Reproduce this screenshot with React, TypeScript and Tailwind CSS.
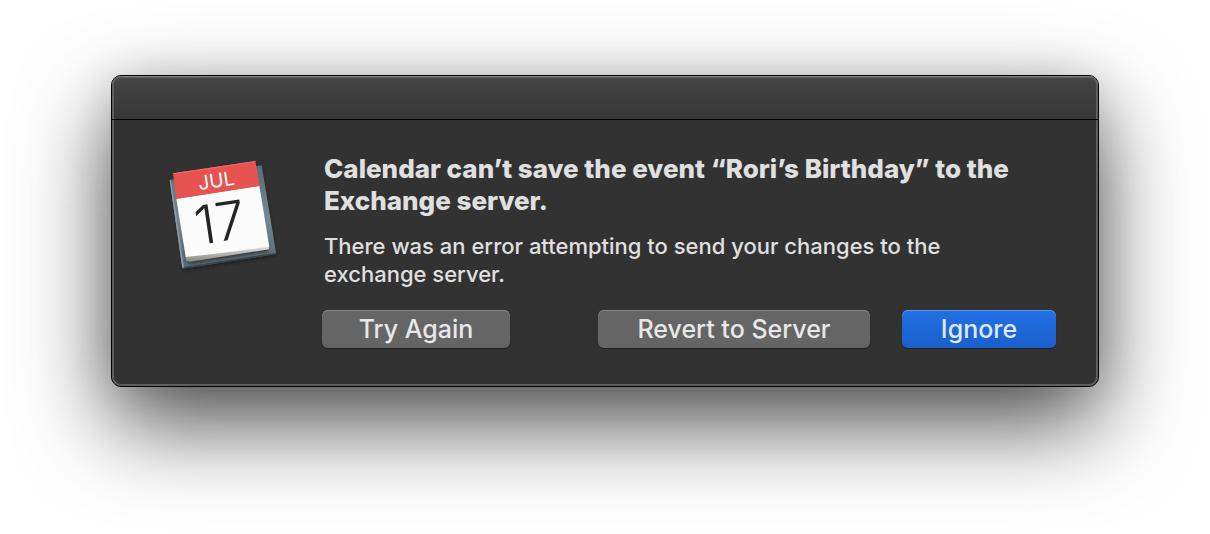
function CalendarIcon() {
  return (
    <svg viewBox="0 9 390 384" className="h-32 w-[130px] shrink-0" role="img" aria-label="Calendar">
      <defs>
        <linearGradient id="slate" x1="0" y1="0" x2="0" y2="1">
          <stop offset="0" stopColor="#5b6c76" />
          <stop offset="0.5" stopColor="#758791" />
          <stop offset="1" stopColor="#56666f" />
        </linearGradient>
        <linearGradient id="curl" x1="0" y1="0" x2="0" y2="1">
          <stop offset="0" stopColor="#e8e8e4" />
          <stop offset="1" stopColor="#85857f" />
        </linearGradient>
        <filter id="soft" x="-20%" y="-20%" width="140%" height="140%">
          <feGaussianBlur stdDeviation="4" />
        </filter>
      </defs>
      <path d="M32 96 L303 50 L350 318 L72 362 Z" fill="#161616" opacity="0.7" filter="url(#soft)" />
      <path d="M29 90 L305 46 L349 312 L67 356 Z" fill="url(#slate)" />
      <path d="M67 352 L349 308 L349 313 L68 357 Z" fill="#36444c" />
      <path d="M29 91 L33 90 L72 352 L67 355 Z" fill="#8b9aa2" />
      <path d="M60 150 L286 110 L326 296 L324 306 L92 342 L80 336 Z" fill="#20282c" opacity="0.65" filter="url(#soft)" />
      <path d="M77 320 L327 287 L327 298 L90 335 L79 333 Z" fill="url(#curl)" />
      <path d="M49 146 L298 107 L328 290 Q205 308 77 321 Z" fill="#fbfbfb" />
      <path d="M39 70 L286 33 L299 108 L49 147 Z" fill="#e65350" />
      <path d="M39 70 L286 33 L287 36 L40 73 Z" fill="#ee6b66" />
      <g transform="rotate(-8.5 170 92)">
        <text x="169" y="112" textAnchor="middle" fontFamily="Inter, sans-serif" fontSize="58" fontWeight="400" fill="#fff">
          JUL
        </text>
      </g>
      <g transform="rotate(-8.5 180 215)">
        <text x="179" y="274" textAnchor="middle" fontFamily="Inter, sans-serif" fontSize="160" fontWeight="300" fill="#242424">
          17
        </text>
      </g>
    </svg>
  );
}

const buttonBase =
  "h-[38px] rounded-md text-center text-[25px] leading-[38px] font-medium focus:outline-none focus-visible:ring-2 focus-visible:ring-sky-300";
const plain =
  "bg-[#656565] text-[#e8e8e8] shadow-[inset_0_1px_0_#838383,0_1px_1px_rgba(0,0,0,0.35)]";
const primary =
  "bg-linear-to-b from-[#2270e6] to-[#1a5fcb] text-[#dfe9fa] shadow-[inset_0_1px_0_#5a94ee,0_1px_1px_rgba(0,0,0,0.35)]";

export default function App() {
  return (
    <main className="min-h-screen overflow-hidden bg-white px-[111px] pt-[75px] pb-[147px] font-['Inter','Liberation_Sans',sans-serif]">
      <section
        role="alertdialog"
        aria-labelledby="alert-title"
        aria-describedby="alert-message"
        className="rounded-[10px] border border-black bg-[#323232] shadow-[0_36px_90px_rgba(0,0,0,0.7),0_0_40px_rgba(0,0,0,0.1)]"
      >
        <div className="rounded-[9px] shadow-[inset_0_0_0_2px_#5e5e5e]">
          <header className="h-11 rounded-t-[9px] border-b border-black bg-linear-to-b from-[#454545] to-[#373737] shadow-[inset_2px_0_0_#5e5e5e,inset_-2px_0_0_#5e5e5e,inset_0_1px_0_#828282,inset_0_2px_0_#5e5e5e]" />
          <div className="flex gap-8 pt-[33px] pr-[42px] pb-[38px] pl-12">
            <CalendarIcon />
            <div className="min-w-0 flex-1">
              <h1 id="alert-title" className="px-0.5 text-[26px] leading-8 font-extrabold text-[#e0e0e0]">
                Calendar can’t save the event “Rori’s Birthday” to the Exchange server.
              </h1>
              <p id="alert-message" className="mt-[15px] max-w-[660px] px-0.5 text-[22px] leading-7 font-medium text-[#e0e0e0]">
                There was an error attempting to send your changes to the exchange server.
              </p>
              <div className="mt-[22px] flex gap-8">
                <button type="button" className={`${buttonBase} ${plain} mr-auto w-[188px]`}>
                  Try Again
                </button>
                <button type="button" className={`${buttonBase} ${plain} w-[272px]`}>
                  Revert to Server
                </button>
                <button type="button" className={`${buttonBase} ${primary} w-[154px]`}>
                  Ignore
                </button>
              </div>
            </div>
          </div>
        </div>
      </section>
    </main>
  );
}
